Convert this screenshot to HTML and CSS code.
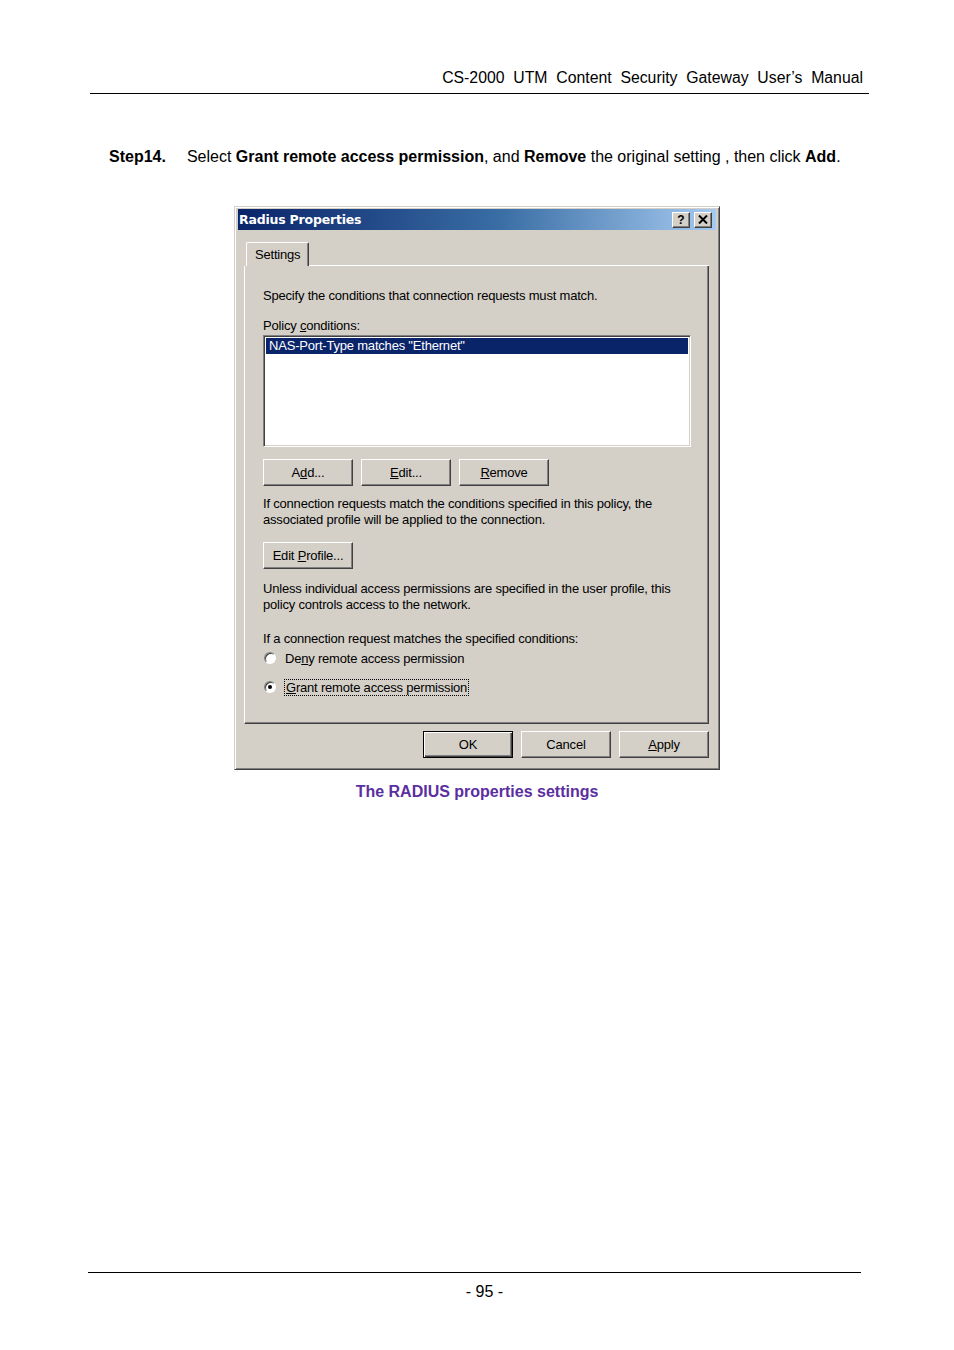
FILE: index.html
```html
<!DOCTYPE html>
<html>
<head>
<meta charset="utf-8">
<link rel="stylesheet" href="styles.css">
</head>
<body>
<div class="page">
  <div class="header">CS-2000&nbsp; UTM&nbsp; Content&nbsp; Security&nbsp; Gateway&nbsp; User’s&nbsp; Manual</div>
  <p class="step"><b>Step14.</b><span class="steptext">Select <b>Grant remote access permission</b>, and <b>Remove</b> the original setting , then click <b>Add</b>.</span></p>

  <div class="dialog">
    <div class="titlebar">
      <span class="title">Radius Properties</span>
      <span class="tbtns">
        <span class="tbtn">?</span>
        <span class="tbtn close">
          <svg width="10" height="9" viewBox="0 0 10 9"><path d="M1 0.5 L9 8.5 M9 0.5 L1 8.5" stroke="#000" stroke-width="2"/></svg>
        </span>
      </span>
    </div>
    <div class="body">
      <div class="tabs"><span class="tab">Settings</span><span class="tabline"></span></div>
      <div class="panel">
        <div class="line">Specify the conditions that connection requests must match.</div>
        <div class="line label">Policy <u>c</u>onditions:</div>
        <div class="listbox">
          <div class="item sel">NAS-Port-Type matches "Ethernet"</div>
        </div>
        <div class="btnrow">
          <span class="btn"><span>A<u>d</u>d...</span></span>
          <span class="btn"><span><u>E</u>dit...</span></span>
          <span class="btn"><span><u>R</u>emove</span></span>
        </div>
        <div class="para">If connection requests match the conditions specified in this policy, the<br>associated profile will be applied to the connection.</div>
        <div class="btnrow single"><span class="btn"><span>Edit <u>P</u>rofile...</span></span></div>
        <div class="para p2">Unless individual access permissions are specified in the user profile, this<br>policy controls access to the network.</div>
        <div class="line ifline">If a connection request matches the specified conditions:</div>
        <div class="radio"><span class="rb"></span><span>De<u>n</u>y remote access permission</span></div>
        <div class="radio r2"><span class="rb on"></span><span class="focus"><u>G</u>rant remote access permission</span></div>
      </div>
      <div class="footbtns">
        <span class="btn def"><span>OK</span></span>
        <span class="btn"><span>Cancel</span></span>
        <span class="btn"><span><u>A</u>pply</span></span>
      </div>
    </div>
  </div>
  <div class="caption">The RADIUS properties settings</div>

  <div class="footer">- 95 -</div>
</div>
</body>
</html>
```

FILE: styles.css
```css
html, body { margin: 0; padding: 0; background: #fff; }
.page {
  width: 954px;
  height: 1350px;
  display: flex;
  flex-direction: column;
  font-family: "Liberation Sans", Arial, sans-serif;
  color: #000;
}
.header {
  margin: 0 85px 0 90px;
  padding: 67px 6px 5px 0;
  border-bottom: 1px solid #000;
  text-align: right;
  font-size: 15.8px;
  line-height: 21px;
}
.step {
  margin: 53px 0 0 109px;
  font-size: 16px;
  line-height: 20px;
}
.steptext { margin-left: 21px; }

.dialog {
  align-self: center;
  margin-top: 39px;
  width: 478px;
  background: #d4d0c8;
  border: 1px solid;
  border-color: #d4d0c8 #404040 #404040 #d4d0c8;
  box-shadow: inset 1px 1px #fff, inset -1px -1px #808080;
  padding: 2px 3px 3px 3px;
  font-family: "Liberation Sans", Arial, sans-serif;
  font-size: 13px;
  letter-spacing: -0.2px;
}
.titlebar {
  height: 21px;
  background: linear-gradient(to right, #0a246a, #3a6ea5 55%, #a6caf0);
  display: flex;
  align-items: center;
  justify-content: space-between;
  padding: 0 4px 0 1px;
}
.title {
  color: #fff;
  font-family: "DejaVu Sans", sans-serif;
  font-weight: bold;
  font-size: 12.5px;
  letter-spacing: -0.2px;
}
.tbtns { display: flex; gap: 4px; }
.tbtn {
  width: 16px;
  height: 14px;
  background: #d4d0c8;
  border: 1px solid;
  border-color: #fff #404040 #404040 #fff;
  box-shadow: inset -1px -1px #808080;
  display: flex;
  align-items: center;
  justify-content: center;
  font-weight: bold;
  font-size: 12px;
  line-height: 14px;
  letter-spacing: 0;
}
.body { padding: 11px 7px 8px 6px; }
.tabs { display: flex; align-items: flex-end; height: 25px; }
.tab {
  margin-left: 2px;
  height: 23px;
  padding: 0 8px;
  border: 1px solid;
  border-bottom: none;
  border-color: #fff #404040 #404040 #fff;
  box-shadow: inset -1px 0 #808080;
  display: flex;
  align-items: center;
  border-radius: 2px 2px 0 0;
}
.tabline { flex: 1; border-bottom: 1px solid #fff; }
.panel {
  height: 435px;
  border: 1px solid;
  border-top: none;
  border-color: #fff #404040 #404040 #fff;
  box-shadow: inset -1px -1px #808080;
  padding: 22px 17px 0 18px;
}
.line { height: 16px; line-height: 16px; }
.label { margin-top: 14px; }
.listbox {
  margin-top: 1px;
  height: 106px;
  background: #fff;
  border: 1px solid;
  border-color: #808080 #fff #fff #808080;
  box-shadow: inset 1px 1px #404040, inset -1px -1px #d4d0c8;
  padding: 2px;
}
.item { height: 16px; line-height: 16px; padding-left: 3px; }
.sel { background: #0a246a; color: #fff; }
.btnrow { display: flex; gap: 8px; margin-top: 12px; }
.btn {
  box-sizing: border-box;
  width: 90px;
  height: 27px;
  background: #d4d0c8;
  border: 1px solid;
  border-color: #fff #404040 #404040 #fff;
  box-shadow: inset -1px -1px #808080;
  display: flex;
  align-items: center;
  justify-content: center;
}
.btn.def {
  border: 1px solid #000;
  box-shadow: inset 1px 1px #fff, inset -1px -1px #404040, inset -2px -2px #808080;
}
.para { margin-top: 10px; line-height: 16px; }
.single { margin-top: 14px; }
.p2 { margin-top: 12px; }
.ifline { margin-top: 18px; }
.radio { display: flex; align-items: center; gap: 9px; height: 18px; margin-top: 2px; }
.r2 { margin-top: 11px; }
.rb {
  width: 12px;
  height: 12px;
  border-radius: 50%;
  box-sizing: border-box;
  background: #fff;
  border: 1px solid;
  border-color: #808080 #fff #fff #808080;
  box-shadow: inset 1px 1px #404040;
  position: relative;
  margin-left: 1px;
}
.rb.on::after {
  content: "";
  position: absolute;
  left: 3px;
  top: 3px;
  width: 4px;
  height: 4px;
  border-radius: 50%;
  background: #000;
}
.focus { outline: 1px dotted #000; outline-offset: 0; padding: 0 1px; }
.footbtns {
  display: flex;
  justify-content: flex-end;
  gap: 8px;
  margin-top: 7px;
}
.caption {
  margin-top: 12px;
  text-align: center;
  color: #5b2fa0;
  font-weight: bold;
  font-size: 16px;
  line-height: 20px;
}
.footer {
  margin: auto 93px 0 88px;
  border-top: 1px solid #000;
  height: 78px;
  box-sizing: border-box;
  padding-top: 10px;
  text-align: center;
  font-size: 16px;
  padding-left: 20px;
}
```
